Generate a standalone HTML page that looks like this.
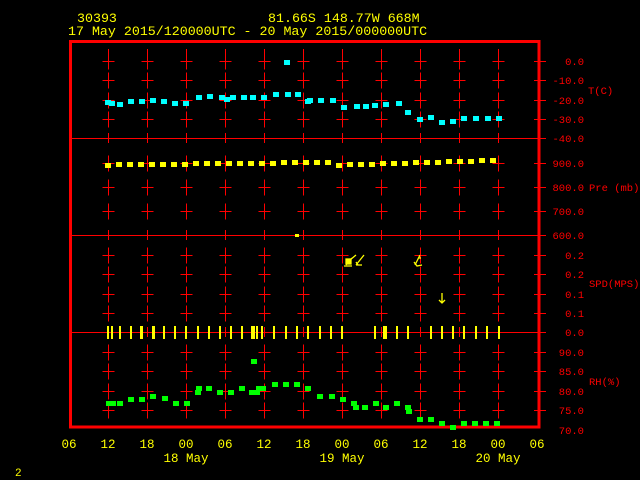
<!DOCTYPE html>
<html><head><meta charset="utf-8"><style>
html,body{margin:0;padding:0;background:#000;width:640px;height:480px;overflow:hidden}
svg{display:block}
text{font-family:"Liberation Mono","DejaVu Sans Mono",monospace}
</style></head><body>
<svg id="s" width="640" height="480" xmlns="http://www.w3.org/2000/svg">
<rect width="640" height="480" fill="#000"/>
<g fill="#ffff00" font-size="13.3">
<text x="77" y="22">30393</text>
<text x="268" y="22">81.66S  148.77W  668M</text>
<text x="68" y="35">17 May 2015/120000UTC - 20 May 2015/000000UTC</text>
<text x="15" y="476" font-size="11">2</text>
</g>
<g id="grid" stroke="#ff0000" stroke-width="1"></g>
<g stroke="#ff0000" stroke-width="1">
<line x1="70" y1="138.5" x2="546" y2="138.5"/>
<line x1="70" y1="235.5" x2="546" y2="235.5"/>
<line x1="70" y1="332.5" x2="546" y2="332.5"/>
</g>
<rect x="70.5" y="41.5" width="468.5" height="385.5" fill="none" stroke="#ff0000" stroke-width="3"/>
<g id="rlab" fill="#ff0000" font-size="10.5" text-anchor="end"></g>
<g fill="#ff0000" font-size="10.5">
<text x="588" y="94">T(C)</text>
<text x="589" y="191">Pre (mb)</text>
<text x="589" y="287">SPD(MPS)</text>
<text x="589" y="385">RH(%)</text>
</g>
<g id="xl" fill="#ffff00" font-size="12.5" text-anchor="middle"></g>
<g fill="#ffff00" font-size="12.5" text-anchor="middle">
<text x="186" y="462">18 May</text>
<text x="342" y="462">19 May</text>
<text x="498" y="462">20 May</text>
</g>
<g id="data" shape-rendering="crispEdges"></g>
<g stroke="#ffff00" stroke-width="1.3" fill="none">
<path d="M346 265 L352 258 M350 260 L356 255 M344 266 l8 0"/>
<rect x="346" y="259" width="5" height="5" fill="#ffff00"/>
<path d="M356 265 L364 255 M356 265 l6 0 M356 262 l2 3"/>
<path d="M415 265 L420 255 M414 262 l3 4 l5 -1 M418 258 l3 0"/>
<path d="M442 293 L442 302 M439 300 l3 3 l3 -3"/>
</g>
<rect x="295" y="234" width="4" height="3" fill="#ffff00"/>
</svg>
<script>
var NS="http://www.w3.org/2000/svg";
function el(p,n,a,t){var e=document.createElementNS(NS,n);for(var k in a)e.setAttribute(k,a[k]);if(t!==undefined)e.textContent=t;document.getElementById(p).appendChild(e);return e;}
var cols=[108,147,186,225,264,303,342,381,420,459,498];
var ticks=[61,80,100,119,163,187,211,255,274,294,313,352,371,391,410];
var lines=[138,235,332];
cols.forEach(function(x0){var x=x0+0.5;
 el("grid","line",{x1:x,y1:49,x2:x,y2:56});
 ticks.forEach(function(y0){var y=y0+0.5;el("grid","line",{x1:x,y1:y-8,x2:x,y2:y+8});el("grid","line",{x1:x-6,y1:y,x2:x+6,y2:y});});
 lines.forEach(function(y){el("grid","line",{x1:x,y1:y-5,x2:x,y2:y+5});});
});
ticks.forEach(function(y0){var y=y0+0.5;el("grid","line",{x1:534,y1:y,x2:546,y2:y});});
var labs=[[61,"0.0"],[80,"-10.0"],[100,"-20.0"],[119,"-30.0"],[138,"-40.0"],[163,"900.0"],[187,"800.0"],[211,"700.0"],[235,"600.0"],[255,"0.2"],[274,"0.2"],[294,"0.1"],[313,"0.1"],[332,"0.0"],[352,"90.0"],[371,"85.0"],[391,"80.0"],[410,"75.0"],[430,"70.0"]];
labs.forEach(function(l){el("rlab","text",{x:584,y:l[0]+4},l[1]);});
var xl=["06","12","18","00","06","12","18","00","06","12","18","00","06"];
xl.forEach(function(t,i){el("xl","text",{x:69+39*i,y:448},t);});
var cy=[[108,102],[112,103],[120,104],[131,101],[142,101],[153,100],[164,101],[175,103],[186,103],[199,97],[210,96],[222,97],[227,99],[233,97],[244,97],[253,97],[264,97],[276,94],[287,62],[288,94],[298,94],[308,101],[310,100],[321,100],[333,100],[344,107],[357,106],[366,106],[375,105],[386,104],[399,103],[408,112],[420,119],[431,117],[442,122],[453,121],[464,118],[476,118],[488,118],[499,118]];
cy.forEach(function(p){el("data","rect",{x:p[0]-3,y:p[1]-2,width:6,height:5,fill:"#00ffff"});});
for(var x=108;x<=500;x+=11){var y=x<330?164.5-(x-108)*0.012:165-(x-330)*0.03;el("data","rect",{x:x-3,y:Math.round(y)-2,width:6,height:5,fill:"#ffff00"});}
var gr=[[109,403],[113,403],[120,403],[131,399],[142,399],[153,396],[165,398],[176,403],[187,403],[198,392],[199,388],[209,388],[220,392],[231,392],[242,388],[252,392],[257,392],[259,388],[263,388],[254,361],[275,384],[286,384],[297,384],[308,388],[320,396],[332,396],[343,399],[354,403],[356,407],[365,407],[376,403],[386,407],[397,403],[408,407],[409,411],[420,419],[431,419],[442,423],[453,427],[464,423],[475,423],[486,423],[497,423]];
gr.forEach(function(p){el("data","rect",{x:p[0]-3,y:p[1]-2,width:6,height:5,fill:"#00ff00"});});
var wb=[108,112,120,131,141,142,153,154,164,175,186,198,209,220,231,242,252,254,257,262,274,286,297,308,320,331,342,375,384,386,397,408,431,442,453,464,476,487,499];
wb.forEach(function(x){el("data","rect",{x:x-1,y:326,width:2,height:13,fill:"#ffff00"});});
</script>
</body></html>
